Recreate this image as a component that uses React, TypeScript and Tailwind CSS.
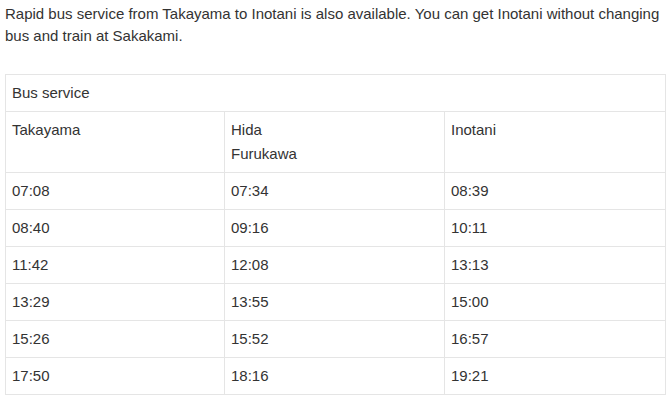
const rows: [string, string, string][] = [
  ['07:08', '07:34', '08:39'],
  ['08:40', '09:16', '10:11'],
  ['11:42', '12:08', '13:13'],
  ['13:29', '13:55', '15:00'],
  ['15:26', '15:52', '16:57'],
  ['17:50', '18:16', '19:21'],
]

const cell = 'border border-[#e5e5e5] px-[6px] py-[6px] align-top font-normal text-left'

export default function App() {
  return (
    <div className="min-h-[401px] bg-white px-[5px] pt-[3px] font-['Liberation_Sans',Arial,sans-serif] text-[15px] leading-[22px] text-[#333]">
      <p>
        Rapid bus service from Takayama to Inotani is also available. You can get Inotani without changing bus and
        train at Sakakami.
      </p>
      <table className="mt-[27px] w-[660px] table-fixed border-collapse leading-[24px]">
        <colgroup>
          <col className="w-[219px]" />
          <col className="w-[220px]" />
          <col className="w-[221px]" />
        </colgroup>
        <thead>
          <tr>
            <th colSpan={3} className={cell}>
              Bus service
            </th>
          </tr>
          <tr>
            <th className={cell}>Takayama</th>
            <th className={cell}>
              Hida
              <br />
              Furukawa
            </th>
            <th className={cell}>Inotani</th>
          </tr>
        </thead>
        <tbody>
          {rows.map((r) => (
            <tr key={r[0]}>
              {r.map((t, i) => (
                <td key={i} className={cell}>
                  {t}
                </td>
              ))}
            </tr>
          ))}
        </tbody>
      </table>
    </div>
  )
}
